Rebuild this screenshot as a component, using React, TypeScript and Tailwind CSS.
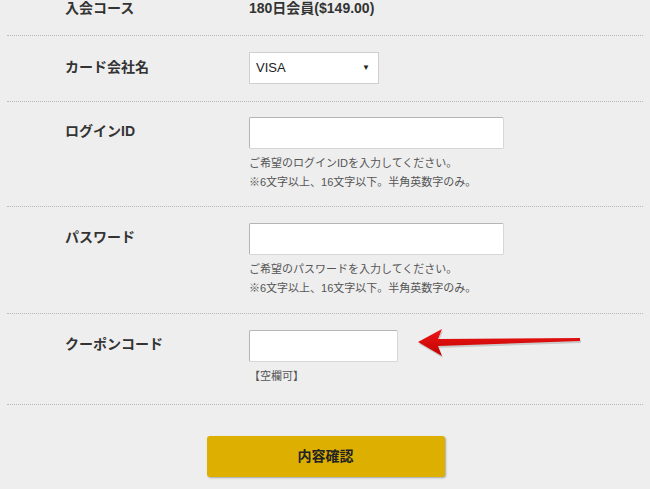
import React from "react";

const font = {
  fontFamily: '"Liberation Sans", "Noto Sans CJK JP", sans-serif',
};

function Row({
  label,
  children,
  className = "",
  labelClass = "",
}: {
  label: string;
  children: React.ReactNode;
  className?: string;
  labelClass?: string;
}) {
  return (
    <div
      className={`flex border-b border-dotted border-[#b8b8b8] ${className}`}
    >
      <div
        className={`w-[242px] shrink-0 pl-[58px] text-[14px] font-bold text-[#333] ${labelClass}`}
      >
        {label}
      </div>
      <div className="flex-1">{children}</div>
    </div>
  );
}

function TextInput({ w }: { w: string }) {
  return (
    <input
      className={`${w} h-[32px] border border-[#d6d6d6] border-t-[#b5b5b5] border-l-[#b5b5b5] bg-white rounded-[2px] outline-none`}
    />
  );
}

function Help({ lines }: { lines: string[] }) {
  return (
    <div className="mt-[5px] text-[11px] leading-[19px] text-[#555]">
      {lines.map((l) => (
        <p key={l}>{l}</p>
      ))}
    </div>
  );
}

export default function App() {
  return (
    <div
      className="w-[650px] h-[489px] overflow-hidden bg-[#eeeeee]"
      style={font}
    >
      <div className="px-[7px] relative">
        {/* 入会コース */}
        <Row label="入会コース" className="h-[36px]" labelClass="leading-[17px]">
          <p className="text-[14px] font-bold leading-[17px] text-[#333]">
            180日会員($149.00)
          </p>
        </Row>

        {/* カード会社名 */}
        <Row
          label="カード会社名"
          className="h-[66px] items-center pb-[2px]"
          labelClass="leading-[17px]"
        >
          <div className="w-[130px] h-[32px] bg-white border border-[#cfcfcf] flex items-center justify-between pl-[6px] pr-[8px] text-[13px] text-[#222]">
            <span>VISA</span>
            <span className="text-[8px]">▼</span>
          </div>
        </Row>

        {/* ログインID */}
        <Row
          label="ログインID"
          className="h-[105px] pt-[15px]"
          labelClass="pt-[6px] leading-[17px]"
        >
          <TextInput w="w-[255px]" />
          <Help
            lines={[
              "ご希望のログインIDを入力してください。",
              "※6文字以上、16文字以下。半角英数字のみ。",
            ]}
          />
        </Row>

        {/* パスワード */}
        <Row
          label="パスワード"
          className="h-[107px] pt-[16px]"
          labelClass="pt-[6px] leading-[17px]"
        >
          <TextInput w="w-[255px]" />
          <Help
            lines={[
              "ご希望のパスワードを入力してください。",
              "※6文字以上、16文字以下。半角英数字のみ。",
            ]}
          />
        </Row>

        {/* クーポンコード */}
        <Row
          label="クーポンコード"
          className="h-[91px] pt-[16px]"
          labelClass="pt-[6px] leading-[17px]"
        >
          <TextInput w="w-[149px]" />
          <Help lines={["【空欄可】"]} />
        </Row>

        {/* 矢印 */}
        <svg
          className="absolute left-[408px] top-[326px]"
          width="180"
          height="34"
          viewBox="0 0 180 34"
        >
          <defs>
            <linearGradient id="ag" x1="0" y1="0" x2="0" y2="1">
              <stop offset="0" stopColor="#f01818" />
              <stop offset="1" stopColor="#c00000" />
            </linearGradient>
          </defs>
          <path
            d="M10 16 L34 3 L30 13 L172 12 L172 15 L30 20 L34 30 Z"
            fill="#000"
            opacity="0.15"
            transform="translate(1 2)"
          />
          <path
            d="M10 16 L34 3 L30 13 L172 12 L172 15 L30 20 L34 30 Z"
            fill="url(#ag)"
          />
        </svg>
      </div>

      <div className="flex justify-center pt-[31px] pl-[1px]">
        <button className="w-[238px] h-[41px] bg-[#dcaf00] rounded-[3px] shadow-[1px_1px_2px_rgba(0,0,0,0.3)] text-[14px] font-bold text-[#222]">
          内容確認
        </button>
      </div>
    </div>
  );
}
